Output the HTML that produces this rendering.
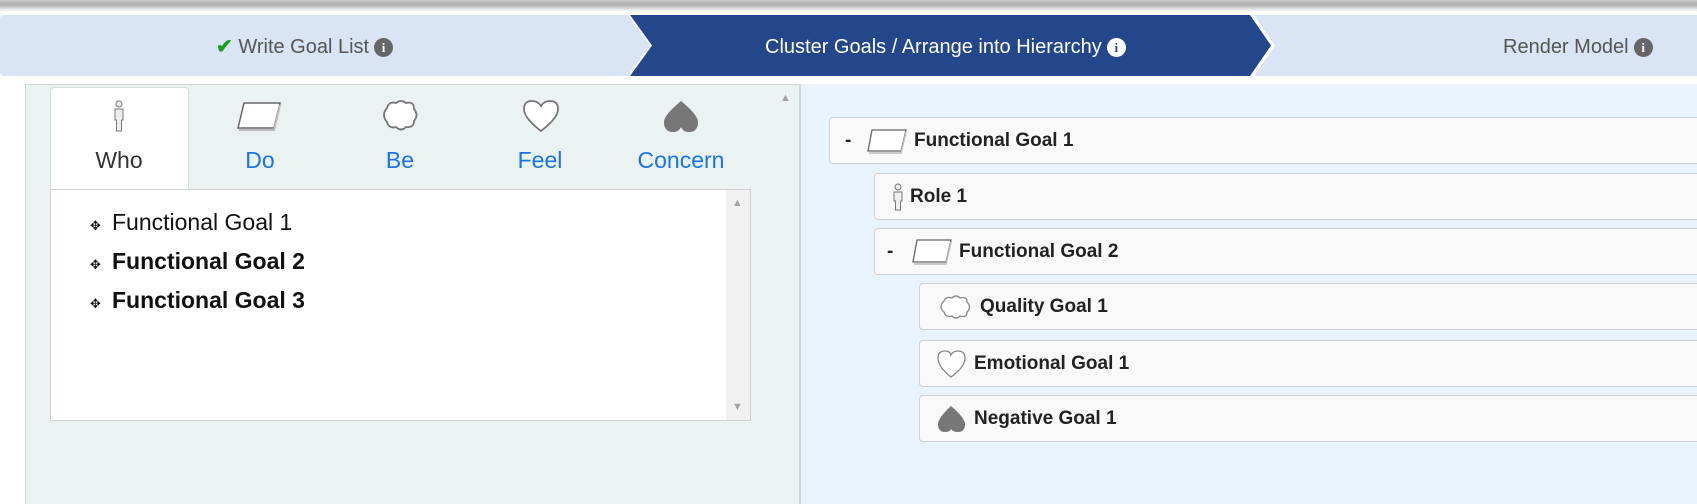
<!DOCTYPE html>
<html><head><meta charset="utf-8"><style>
*{box-sizing:border-box;margin:0;padding:0}
html,body{width:1697px;height:504px;overflow:hidden}
body{background:#fff;font-family:"Liberation Sans",sans-serif;position:relative}
.abs{position:absolute}
.topbar{left:0;top:0;width:1697px;height:12px;background:linear-gradient(#c8c8c8,#b0b0b0 40%,#e8e8e8 80%,#fff)}
.step{font-size:20px;top:34px;height:26px;line-height:26px;white-space:nowrap}
.info{display:inline-block;width:19px;height:19px;border-radius:50%;background:#666;color:#fff;font:bold 13px "Liberation Serif",serif;text-align:center;line-height:19px;vertical-align:1px;margin-left:5px}
.left{left:25px;top:84px;width:775px;height:440px;background:#ebf3f2;border:1px solid #cfd6d6}
.tab{top:104px;text-align:center;font-size:23px;color:#1a73e8;width:130px}
.list{left:50px;top:189px;width:701px;height:232px;background:#fff;border:1px solid #d0d0d0}
.item{left:90px;font-size:23px;color:#111}
.item b{font-weight:bold}
.mv{display:inline-block;width:12px;font-size:13px;margin-right:10px}
.right{left:800px;top:84px;width:897px;height:440px;background:#e9f3fd;border-left:1px solid #cfd6d6}
.row{height:47px;right:-5px;background:#f9f9f9;border:1px solid #cdd2d6;border-radius:4px;font-weight:bold;font-size:19px;color:#222;display:flex;align-items:center}
.row svg{margin-right:6px}
</style></head><body>
<div class="abs topbar"></div>
<svg class="abs" style="left:0;top:15px" width="1697" height="61">
<path d="M4 0H628L650 30.5L628 61H4Q0 61 0 57V4Q0 0 4 0Z" fill="#d9e4f5"/>
<path d="M630 0H1250L1271 30.5L1250 61H630L652 30.5Z" fill="#24468a"/>
<path d="M1254 0H1697V61H1254L1275 30.5Z" fill="#d9e4f5"/>
</svg>
<div class="abs step" style="left:216px;color:#555"><span style="color:#1ca01c;font-weight:bold">✔</span> Write Goal List<span class="info">i</span></div>
<div class="abs step" style="left:765px;color:#fff">Cluster Goals / Arrange into Hierarchy<span class="info" style="background:#fff;color:#24468a">i</span></div>
<div class="abs step" style="left:1503px;color:#555">Render Model<span class="info">i</span></div>

<div class="abs left"></div>
<div class="abs" style="left:50px;top:87px;width:139px;height:103px;background:#fff;border:1px solid #d8dede;border-bottom:none;border-radius:4px 4px 0 0"></div>
<svg class="abs" style="left:113px;top:100px" width="12" height="32"><circle cx="6" cy="4" r="3" fill="#eee" stroke="#777"/><path d="M2 9H10V20H8.5V31H3.5V20H2Z" fill="#eee" stroke="#777"/></svg>
<svg class="abs" style="left:236px;top:100px" width="46" height="32"><path d="M8 3H44L38 28H2Z" fill="#fff" stroke="#666" stroke-width="1.5"/><path d="M3 30H38L44 5" fill="none" stroke="#bbb" stroke-width="2"/></svg>
<svg class="abs" style="left:379px;top:99px" width="42" height="34"><path d="M8 9Q10 2 17 4Q22 0 27 4Q35 2 35 10Q40 16 35 22Q35 29 27 28Q22 33 17 28Q10 30 8 23Q2 16 8 9Z" fill="#fff" stroke="#777" stroke-width="1.8"/></svg>
<svg class="abs" style="left:522px;top:99px" width="38" height="34"><path d="M19 32Q2 19 2 10Q2 2 10 2Q16 2 19 7Q22 2 28 2Q36 2 36 10Q36 19 19 32Z" fill="#fff" stroke="#777" stroke-width="1.8"/></svg>
<svg class="abs" style="left:662px;top:99px" width="38" height="34"><path d="M19 2Q36 16 36 23Q36 33 27 33Q21 33 19 28Q17 33 11 33Q2 33 2 23Q2 16 19 2Z" fill="#777"/></svg>
<div class="abs tab" style="left:54px;color:#333;top:147px">Who</div>
<div class="abs tab" style="left:195px;top:147px">Do</div>
<div class="abs tab" style="left:335px;top:147px">Be</div>
<div class="abs tab" style="left:475px;top:147px">Feel</div>
<div class="abs tab" style="left:616px;top:147px">Concern</div>
<div class="abs list"></div>
<div class="abs" style="left:726px;top:190px;width:24px;height:230px;background:#f1f1f1"></div>
<div class="abs" style="left:732px;top:197px;color:#a3a3a3;font-size:11px">▲</div>
<div class="abs" style="left:732px;top:401px;color:#a3a3a3;font-size:11px">▼</div>
<div class="abs" style="left:780px;top:92px;color:#a3a3a3;font-size:11px">▲</div>
<div class="abs item" style="top:209px"><span class="mv">✥</span>Functional Goal 1</div>
<div class="abs item" style="top:248px"><span class="mv">✥</span><b>Functional Goal 2</b></div>
<div class="abs item" style="top:287px"><span class="mv">✥</span><b>Functional Goal 3</b></div>

<div class="abs right"></div>
<div class="abs row" style="left:829px;top:117px"><span style="width:36px;padding-left:15px">-</span><svg width="42" height="26"><path d="M6 2H40L35 23H2Z" fill="#fff" stroke="#666" stroke-width="1.3"/><path d="M3 25H35L40 4" fill="none" stroke="#bbb" stroke-width="1.5"/></svg>Functional Goal 1</div>
<div class="abs row" style="left:874px;top:173px"><span style="width:17px"></span><svg width="12" height="28"><circle cx="6" cy="4" r="3" fill="#eee" stroke="#777"/><path d="M2 9H10V18H8.5V27H3.5V18H2Z" fill="#eee" stroke="#777"/></svg>Role 1</div>
<div class="abs row" style="left:874px;top:228px"><span style="width:36px;padding-left:12px">-</span><svg width="42" height="28"><path d="M6 2H40L35 24H2Z" fill="#fff" stroke="#666" stroke-width="1.3"/><path d="M3 26H35L40 4" fill="none" stroke="#bbb" stroke-width="1.5"/></svg>Functional Goal 2</div>
<div class="abs row" style="left:919px;top:283px"><span style="width:16px"></span><svg width="38" height="26"><path d="M8 7Q10 2 16 4Q20 0 24 4Q31 2 31 8Q36 13 31 18Q31 24 24 22Q20 26 16 22Q10 24 8 18Q2 13 8 7Z" fill="#fff" stroke="#888" stroke-width="1.3"/></svg>Quality Goal 1</div>
<div class="abs row" style="left:919px;top:340px"><span style="width:16px"></span><svg width="32" height="30"><path d="M15 28Q2 18 2 9Q2 2 9 2Q14 2 15 6Q17 2 22 2Q29 2 29 9Q29 18 15 28Z" fill="#fff" stroke="#888" stroke-width="1.3"/></svg>Emotional Goal 1</div>
<div class="abs row" style="left:919px;top:395px"><span style="width:16px"></span><svg width="32" height="30"><path d="M15 2Q29 14 29 20Q29 28 22 28Q17 28 15 25Q14 28 9 28Q2 28 2 20Q2 14 15 2Z" fill="#777"/></svg>Negative Goal 1</div>
</body></html>
